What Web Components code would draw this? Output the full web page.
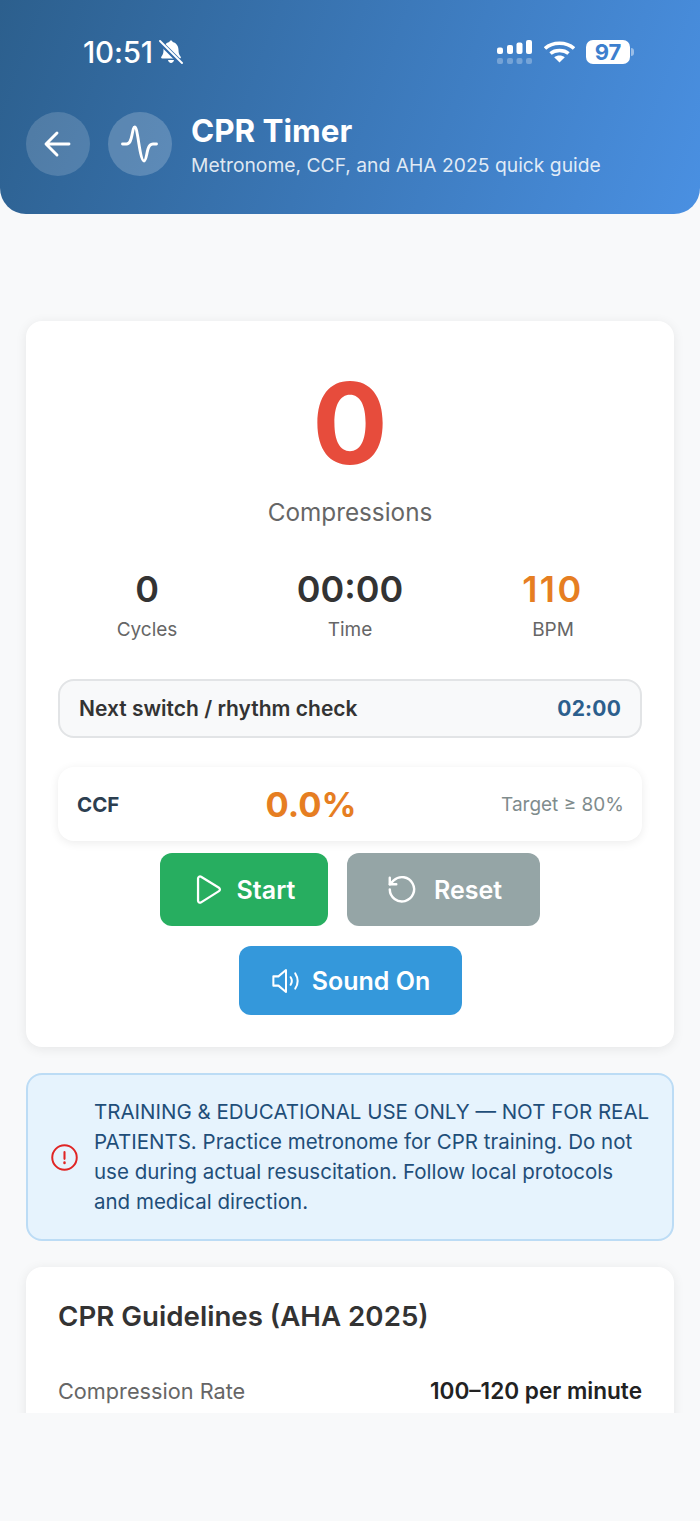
<!DOCTYPE html>
<html>
<head>
<meta charset="utf-8">
<style>
    html, body{
        margin: 0;
        height: 1521px;
        overflow: hidden;
        background: #f8f9fa;
        font-family: Inter, "Noto Sans", sans-serif;
    }
</style>
</head>
<body>
<cpr-page></cpr-page>
<script>
const ICONS = {
    back: `<path d="M31 20H9M19 9 8 20l11 11" stroke-width="2.9"/>`,
    pulse: `<path d="M2.500 20H6.500C10 20 11 16 12 11 13 6 13.500 3 14.700 3 16 3 16.800 7 18 14 19.500 24 21.500 37 24 37 26 37 26.500 30 28 25 29 21.500 30 20 33 20H36.500" stroke-width="2.900"/>`,
    play: `<path d="M6 5.300c0-1.900 2-3 3.600-2L30.800 16.300c1.500 1 1.500 3.100 0 4L9.600 33.700c-1.600 1-3.600-.1-3.600-2Z" stroke-width="2.700"/>`,
    reset: `<path d="M5.500 19A14 14 0 1 0 10 8.500L5.500 13" stroke-width="2.800"/><path d="M5.500 5.500V13H13" stroke-width="2.800"/>`,
    sound: `<path d="M4 13.500h6L19 6v26l-9-7.500H4Z" stroke-width="2.400"/><path d="M24.500 14.500c1.800 2.800 1.800 6.200 0 9M30 10c3.500 5.500 3.500 12.500 0 18" stroke-width="2.400"/>`,
    alert: `<circle cx="12" cy="12" r="11.800" stroke-width="1.900"/><path d="M12 6.700v6.600" stroke-width="2"/><path d="M12 16.800v.4" stroke-width="2.400"/>`
};

class StatusBar extends HTMLElement{
    constructor(){
        super();
        this.attachShadow({ mode: 'open' });
        this.shadowRoot.innerHTML = `
            <style>
                :host{
                    display: flex;
                    align-items: center;
                    justify-content: space-between;
                    height: 26px;
                    padding: 0 66px 0 83px;
                    color: #fff;
                }
                .left, .right{ display: flex; align-items: center; }
                .time{ font-size: 29.500px; font-weight: 500; letter-spacing: -.2px; }
                .bell{ margin-left: 6px; }
                .right{ gap: 11px; }
                .batt{ display: flex; align-items: center; gap: 1px; }
                .cell{
                    width: 44px;
                    height: 24px;
                    border-radius: 7px;
                    background: #fff;
                    color: #3d7fce;
                    font-size: 22px;
                    font-weight: 700;
                    line-height: 24px;
                    text-align: center;
                }
                .tip{ width: 3px; height: 8px; border-radius: 0 3px 3px 0; background: rgba(255,255,255,.45); }
            </style>
            <div class="left">
                <span class="time">10:51</span>
                <svg class="bell" width="24" height="24" viewBox="0 0 24 24" fill="#fff">
                    <path d="M12 .5c.9 0 1.500.6 1.700 1.500C17.500 3 19.500 6 19.500 10c0 3.500.8 5 2 6.500.8 1 .3 2-.8 2H3.300c-1.100 0-1.600-1-.8-2C3.700 15 4.500 13.500 4.500 10 4.500 6 6.500 3 10.300 2 10.500 1.100 11.100.5 12 .5Z"/>
                    <path d="M9 20h6c-.3 1.700-1.500 2.900-3 2.900S9.300 21.700 9 20Z"/>
                    <path d="M0 1 22 23" stroke="#3069a8" stroke-width="4.800"/>
                    <path d="M1 1 23 23" stroke="#fff" stroke-width="1.900" stroke-linecap="round"/>
                </svg>
            </div>
            <div class="right">
                <svg width="36" height="24" viewBox="0 0 36 24" fill="#fff">
                    <rect x="0" y="7.500" width="6" height="6.500" rx="2"/>
                    <rect x="10" y="5" width="6" height="9" rx="2"/>
                    <rect x="19.500" y="2.500" width="6" height="11.500" rx="2"/>
                    <rect x="29" y="0" width="6" height="14" rx="2"/>
                    <g opacity=".28">
                        <rect x="0" y="18" width="6" height="6" rx="2"/>
                        <rect x="10" y="18" width="6" height="6" rx="2"/>
                        <rect x="19.500" y="18" width="6" height="6" rx="2"/>
                        <rect x="29" y="18" width="6" height="6" rx="2"/>
                    </g>
                </svg>
                <svg width="31" height="24" viewBox="0 0 31 24" fill="none" stroke="#fff" stroke-width="3.500">
                    <path d="M1 8.500C8.500 1.500 22.500 1.500 30 8.500"/>
                    <path d="M6.500 13.500c4.500-4 13.500-4 18 0"/>
                    <path d="M15.500 22.500 10.200 17.300c3-2.300 7.600-2.300 10.600 0Z" fill="#fff" stroke="none"/>
                </svg>
                <div class="batt"><div class="cell">97</div><div class="tip"></div></div>
            </div>
        `;
    };
};

class RoundIcon extends HTMLElement{
    constructor(){
        super();
        this.attachShadow({ mode: 'open' });
    };

    connectedCallback(){
        this.shadowRoot.innerHTML = `
            <style>
                :host{
                    display: flex;
                    flex: none;
                    align-items: center;
                    justify-content: center;
                    width: 64px;
                    height: 64px;
                    border-radius: 50%;
                    background: rgba(255,255,255,var(--icon-alpha, .2));
                }
            </style>
            <svg width="40" height="40" viewBox="0 0 40 40" fill="none" stroke="#fff" stroke-linecap="round" stroke-linejoin="round">${ICONS[this.getAttribute('icon')]}</svg>
        `;
    };
};

class AppHeader extends HTMLElement{
    constructor(){
        super();
        this.attachShadow({ mode: 'open' });
        this.shadowRoot.innerHTML = `
            <style>
                :host{
                    display: block;
                    box-sizing: border-box;
                    height: 214px;
                    padding-top: 39px;
                    border-radius: 0 0 26px 26px;
                    background: linear-gradient(110deg, #2c5f8d 0%, #4a90e2 100%);
                    color: #fff;
                }
                .row{
                    display: flex;
                    align-items: flex-start;
                    gap: 18px;
                    margin-top: 47px;
                    padding-left: 26px;
                }
                .back{ --icon-alpha: .16; }
                h1{ margin: 0; font-size: 31.400px; font-weight: 700; line-height: 36px; }
                p{ margin: 4px 0 0; font-size: 19.300px; line-height: 24px; color: rgba(255,255,255,.85); }
                .text{ margin: 1px 0 0 1px; }
            </style>
            <status-bar></status-bar>
            <div class="row">
                <round-icon class="back" icon="back"></round-icon>
                <round-icon icon="pulse"></round-icon>
                <div class="text">
                    <h1>CPR Timer</h1>
                    <p>Metronome, CCF, and AHA 2025 quick guide</p>
                </div>
            </div>
        `;
    };
};

class StatItem extends HTMLElement{
    constructor(){
        super();
        this.attachShadow({ mode: 'open' });
    };

    connectedCallback(){
        this.shadowRoot.innerHTML = `
            <style>
                :host{ display: block; text-align: center; }
                .v{ font-size: 36px; font-weight: 600; line-height: 44px; letter-spacing: var(--stat-spacing, 0); color: var(--stat-color, #333); }
                .l{ margin-top: 8px; font-size: 19px; line-height: 22px; color: #666; }
            </style>
            <div class="v">${this.getAttribute('value')}</div>
            <div class="l">${this.getAttribute('label')}</div>
        `;
    };
};

class ActionBtn extends HTMLElement{
    constructor(){
        super();
        this.attachShadow({ mode: 'open' });
    };

    connectedCallback(){
        let size = this.getAttribute('size') || 32;
        this.shadowRoot.innerHTML = `
            <style>
                :host{
                    display: inline-flex;
                    box-sizing: border-box;
                    align-items: center;
                    justify-content: center;
                    gap: var(--btn-gap, 12px);
                    border-radius: 12px;
                    color: #fff;
                    font-size: 25px;
                    font-weight: 600;
                }
            </style>
            <svg width="${size}" height="${size}" viewBox="0 0 38 38" fill="none" stroke="#fff" stroke-linecap="round" stroke-linejoin="round">${ICONS[this.getAttribute('icon')]}</svg>
            <slot></slot>
        `;
    };
};

class CounterCard extends HTMLElement{
    constructor(){
        super();
        this.attachShadow({ mode: 'open' });
        this.shadowRoot.innerHTML = `
            <style>
                :host{
                    display: block;
                    box-sizing: border-box;
                    height: 726px;
                    padding: 34px 32px 32px;
                    border-radius: 16px;
                    background: #fff;
                    box-shadow: 0 2px 12px rgba(0,0,0,.08);
                    color: #333;
                }
                .count{ height: 136px; font-size: 112px; font-weight: 700; line-height: 136px; text-align: center; color: #e74c3c; }
                .label{ margin-top: 7px; font-size: 24.300px; line-height: 29px; text-align: center; color: #666; }
                .stats{ display: grid; grid-template-columns: 1fr 1fr 1fr; gap: 0 25px; margin-top: 40px; }
                .orange{ --stat-color: #e67e22; --stat-spacing: 2.500px; }
                .next{
                    display: flex;
                    box-sizing: border-box;
                    align-items: center;
                    justify-content: space-between;
                    height: 59px;
                    margin-top: 38px;
                    padding: 0 19px;
                    border: 2px solid #e2e4e6;
                    border-radius: 16px;
                    background: #f8f9fa;
                    font-size: 21px;
                    font-weight: 600;
                }
                .next b{ font-weight: 700; color: #2c5f8d; letter-spacing: .2px; }
                .ccf{
                    display: grid;
                    grid-template-columns: 1fr auto 1fr;
                    align-items: center;
                    height: 74px;
                    margin-top: 29px;
                    padding: 0 18px 0 19px;
                    border-radius: 16px;
                    background: #fff;
                    box-shadow: 0 2px 10px rgba(0,0,0,.08);
                }
                .ccf .name{ font-size: 20.500px; font-weight: 700; color: #2c3e50; }
                .ccf .pct{ font-size: 34.500px; font-weight: 700; color: #e67e22; margin-right: 79px; }
                .ccf .target{ font-size: 19px; color: #7f8c8d; text-align: right; }
                .btns{ display: flex; justify-content: center; gap: 19px; margin-top: 12px; }
                .btns.two{ margin-top: 20px; }
                .start{ width: 168px; height: 73px; background: #27ae60; }
                .reset{ width: 193px; height: 73px; background: #95a5a6; --btn-gap: 16px; }
                .sound{ width: 223px; height: 69px; background: #3498db; --btn-gap: 10px; }
            </style>
            <div class="count">0</div>
            <div class="label">Compressions</div>
            <div class="stats">
                <stat-item value="0" label="Cycles"></stat-item>
                <stat-item value="00:00" label="Time"></stat-item>
                <stat-item class="orange" value="110" label="BPM"></stat-item>
            </div>
            <div class="next"><span>Next switch / rhythm check</span><b>02:00</b></div>
            <div class="ccf">
                <span class="name">CCF</span>
                <span class="pct">0.0%</span>
                <span class="target">Target ≥ 80%</span>
            </div>
            <div class="btns">
                <action-btn class="start" icon="play" size="32">Start</action-btn>
                <action-btn class="reset" icon="reset" size="33">Reset</action-btn>
            </div>
            <div class="btns two">
                <action-btn class="sound" icon="sound" size="32">Sound On</action-btn>
            </div>
        `;
    };
};

class NoticeBox extends HTMLElement{
    constructor(){
        super();
        this.attachShadow({ mode: 'open' });
        this.shadowRoot.innerHTML = `
            <style>
                :host{
                    display: flex;
                    box-sizing: border-box;
                    align-items: center;
                    gap: 16px;
                    height: 168px;
                    margin-top: 26px;
                    padding: 0 20px 0 23px;
                    border: 2px solid #bcdcf5;
                    border-radius: 16px;
                    background: #e6f3fd;
                    font-size: 20.500px;
                    line-height: 30px;
                    color: #1f4e79;
                }
                svg{ flex: none; }
            </style>
            <svg width="27" height="27" viewBox="-1 -1 26 26" fill="none" stroke="#e02424" stroke-linecap="round">${ICONS.alert}</svg>
            <div><slot></slot></div>
        `;
    };
};

class GuideRow extends HTMLElement{
    constructor(){
        super();
        this.attachShadow({ mode: 'open' });
        this.shadowRoot.innerHTML = `
            <style>
                :host{
                    display: flex;
                    justify-content: space-between;
                    align-items: baseline;
                    font-size: 21.700px;
                    line-height: 30px;
                    color: #666;
                }
                ::slotted([slot=val]){ font-size: 22.600px; font-weight: 600; color: #222; }
            </style>
            <slot name="key"></slot><slot name="val"></slot>
        `;
    };
};

class GuideCard extends HTMLElement{
    constructor(){
        super();
        this.attachShadow({ mode: 'open' });
        this.shadowRoot.innerHTML = `
            <style>
                :host{
                    display: block;
                    box-sizing: border-box;
                    margin-top: 26px;
                    padding: 32px 32px 32px;
                    border-radius: 16px;
                    background: #fff;
                    box-shadow: 0 2px 12px rgba(0,0,0,.08);
                }
                h2{ margin: 0 0 43px; font-size: 27.700px; font-weight: 600; line-height: 34px; color: #333; }
            </style>
            <h2><slot name="title"></slot></h2>
            <slot></slot>
        `;
    };
};

class CprPage extends HTMLElement{
    constructor(){
        super();
        this.attachShadow({ mode: 'open' });
        this.shadowRoot.innerHTML = `
            <style>
                :host{ display: block; }
                .scroll{
                    box-sizing: border-box;
                    height: 1199px;
                    padding: 107px 26px 0;
                    overflow: hidden;
                }
            </style>
            <app-header></app-header>
            <div class="scroll">
                <counter-card></counter-card>
                <notice-box>TRAINING &amp; EDUCATIONAL USE ONLY — NOT FOR REAL PATIENTS. Practice metronome for CPR training. Do not use during actual resuscitation. Follow local protocols and medical direction.</notice-box>
                <guide-card>
                    <span slot="title">CPR Guidelines (AHA 2025)</span>
                    <guide-row><span slot="key">Compression Rate</span><span slot="val">100–120 per minute</span></guide-row>
                </guide-card>
            </div>
        `;
    };
};

customElements.define("status-bar", StatusBar);
customElements.define("round-icon", RoundIcon);
customElements.define("app-header", AppHeader);
customElements.define("stat-item", StatItem);
customElements.define("action-btn", ActionBtn);
customElements.define("counter-card", CounterCard);
customElements.define("notice-box", NoticeBox);
customElements.define("guide-row", GuideRow);
customElements.define("guide-card", GuideCard);
customElements.define("cpr-page", CprPage);
</script>
</body>
</html>
